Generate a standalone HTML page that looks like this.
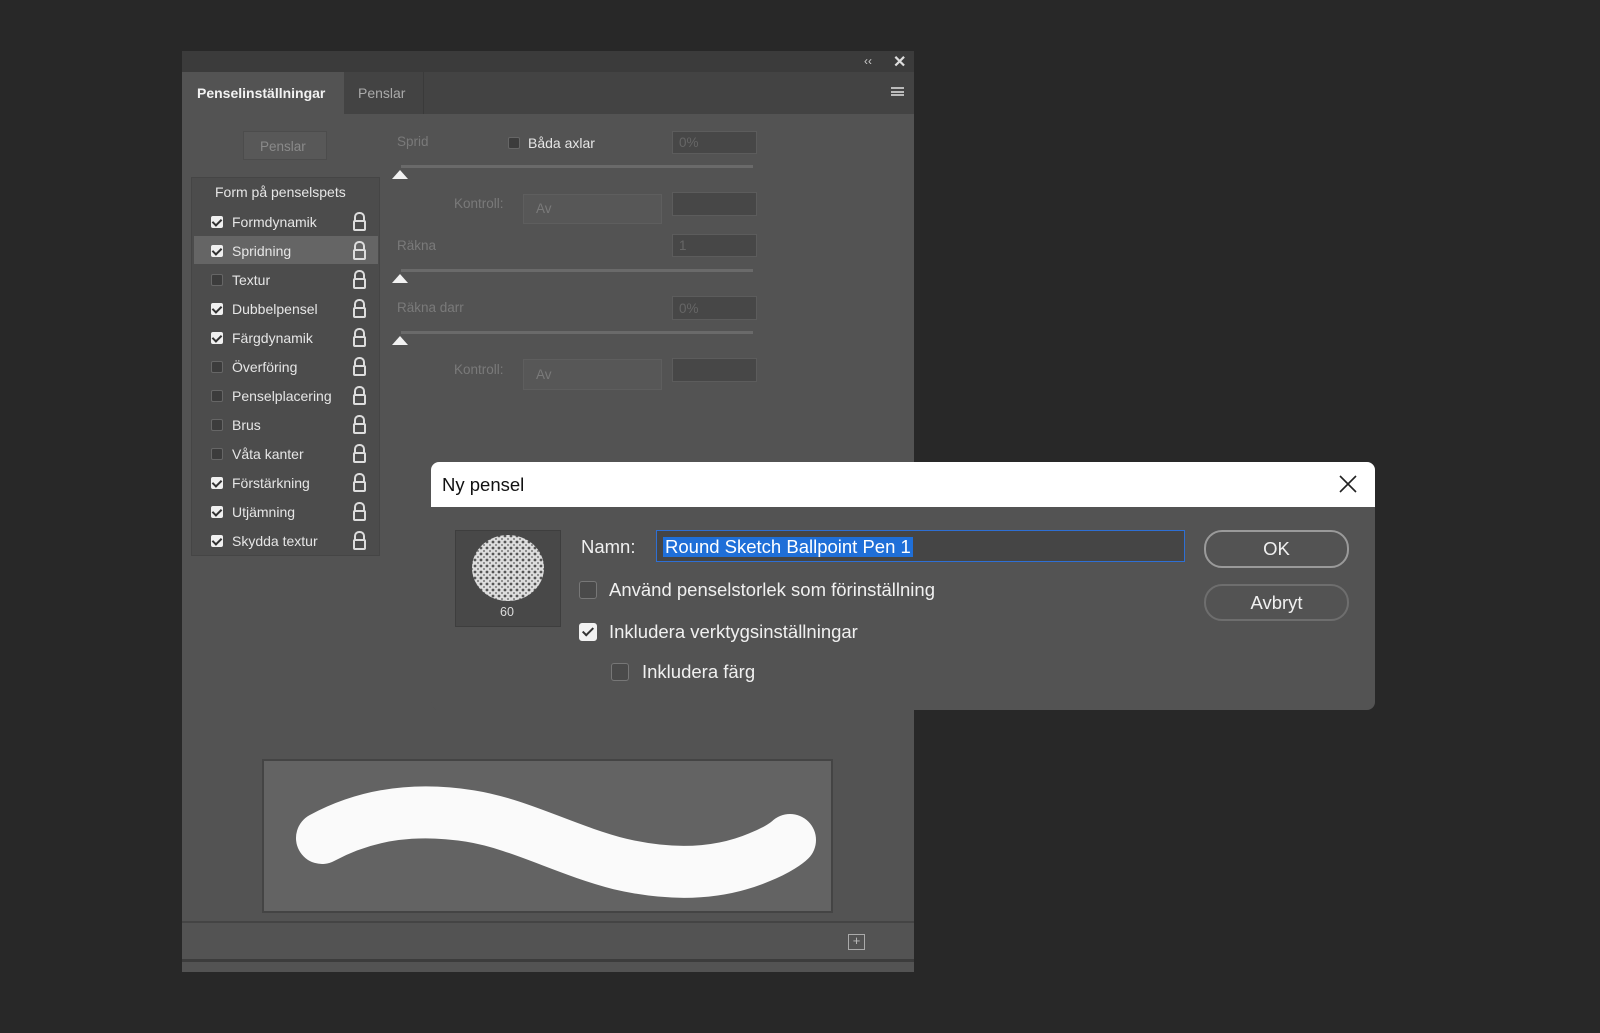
<!DOCTYPE html>
<html><head><meta charset="utf-8"><style>
*{margin:0;padding:0;box-sizing:border-box}
body{width:1600px;height:1033px;background:#282828;position:relative;overflow:hidden;font-family:"Liberation Sans",sans-serif}
.a{position:absolute}
.panel{left:182px;top:51px;width:732px;height:921px;background:#535353}
.t{color:#e6e6e6;font-size:14px}
.dim{color:#7a7a7a;font-size:13.5px}
.cb{width:12px;height:12px;border-radius:2px;background:#3c3c3c;border:1px solid #666}
.cbk{width:12px;height:12px;border-radius:2px;background:#f0f0f0}
.cbk::after{content:"";position:absolute;left:3px;top:1px;width:4px;height:7px;border:solid #333;border-width:0 2px 2px 0;transform:rotate(45deg)}
.inp{background:#474747;border:1px solid #5c5c5c}
.slider{height:3px;background:#6a6a6a}
.thumb{width:0;height:0;border-left:8px solid transparent;border-right:8px solid transparent;border-bottom:9px solid #f2f2f2}
.lock{width:13px;height:11px;border:2px solid #ddd;border-radius:2px}
.lock::before{content:"";position:absolute;left:-1px;top:-10px;width:7px;height:8px;border:2px solid #ddd;border-bottom:none;border-radius:5px 5px 0 0}
.dlg{left:431px;top:462px;width:944px;height:248px;background:#535353;border-radius:8px;overflow:hidden}
.dt{color:#f0f0f0;font-size:18.5px}
.btn{border:2px solid #9a9a9a;border-radius:18px;color:#f0f0f0;font-size:18.5px;text-align:center}
.dcb{width:18px;height:18px;border-radius:3px;border:1px solid #777;background:#4a4a4a}
</style></head><body>
<div class="a panel"></div>
<div class="a" style="left:182px;top:51px;width:732px;height:21px;background:#3b3b3b"></div>
<div class="a" style="left:864px;top:54px;color:#ccc;font-size:12px">‹‹</div>
<div class="a" style="left:893px;top:52px;color:#ddd;font-size:16px;font-weight:bold">✕</div>
<div class="a" style="left:182px;top:72px;width:732px;height:42px;background:#434343"></div>
<div class="a" style="left:182px;top:72px;width:162px;height:42px;background:#535353"></div>
<div class="a" style="left:344px;top:72px;width:80px;height:42px;border-right:1px solid #3a3a3a"></div>
<div class="a t" style="left:197px;top:85px;font-weight:bold;color:#f2f2f2">Penselinställningar</div>
<div class="a" style="left:358px;top:85px;color:#aaa;font-size:14px">Penslar</div>
<div class="a" style="left:891px;top:87px;width:13px;height:9px;border-top:2px solid #bbb;border-bottom:2px solid #bbb"></div>
<div class="a" style="left:891px;top:91px;width:13px;height:2px;background:#bbb"></div>
<div class="a" style="left:243px;top:131px;width:84px;height:29px;background:#585858;border:1px solid #4c4c4c"></div>
<div class="a dim" style="left:260px;top:139px;color:#8a8a8a">Penslar</div>
<div class="a" style="left:191px;top:177px;width:189px;height:379px;background:#4c4c4c;border:1px solid #454545"></div>
<div class="a t" style="left:215px;top:184px">Form på penselspets</div>

<div class="a" style="left:194px;top:236px;width:184px;height:28px;background:#656565"></div>

<div class="a cbk" style="left:211px;top:216px"></div><div class="a t" style="left:232px;top:214px">Formdynamik</div><div class="a lock" style="left:353px;top:220px"></div>
<div class="a cbk" style="left:211px;top:245px"></div><div class="a t" style="left:232px;top:243px">Spridning</div><div class="a lock" style="left:353px;top:249px"></div>
<div class="a cb" style="left:211px;top:274px"></div><div class="a t" style="left:232px;top:272px">Textur</div><div class="a lock" style="left:353px;top:278px"></div>
<div class="a cbk" style="left:211px;top:303px"></div><div class="a t" style="left:232px;top:301px">Dubbelpensel</div><div class="a lock" style="left:353px;top:307px"></div>
<div class="a cbk" style="left:211px;top:332px"></div><div class="a t" style="left:232px;top:330px">Färgdynamik</div><div class="a lock" style="left:353px;top:336px"></div>
<div class="a cb" style="left:211px;top:361px"></div><div class="a t" style="left:232px;top:359px">Överföring</div><div class="a lock" style="left:353px;top:365px"></div>
<div class="a cb" style="left:211px;top:390px"></div><div class="a t" style="left:232px;top:388px">Penselplacering</div><div class="a lock" style="left:353px;top:394px"></div>
<div class="a cb" style="left:211px;top:419px"></div><div class="a t" style="left:232px;top:417px">Brus</div><div class="a lock" style="left:353px;top:423px"></div>
<div class="a cb" style="left:211px;top:448px"></div><div class="a t" style="left:232px;top:446px">Våta kanter</div><div class="a lock" style="left:353px;top:452px"></div>
<div class="a cbk" style="left:211px;top:477px"></div><div class="a t" style="left:232px;top:475px">Förstärkning</div><div class="a lock" style="left:353px;top:481px"></div>
<div class="a cbk" style="left:211px;top:506px"></div><div class="a t" style="left:232px;top:504px">Utjämning</div><div class="a lock" style="left:353px;top:510px"></div>
<div class="a cbk" style="left:211px;top:535px"></div><div class="a t" style="left:232px;top:533px">Skydda textur</div><div class="a lock" style="left:353px;top:539px"></div>

<div class="a dim" style="left:397px;top:134px">Sprid</div>
<div class="a cb" style="left:508px;top:137px"></div>
<div class="a t" style="left:528px;top:135px">Båda axlar</div>
<div class="a inp" style="left:672px;top:131px;width:85px;height:23px"></div><div class="a dim" style="left:679px;top:135px;color:#666">0%</div>
<div class="a slider" style="left:401px;top:165px;width:352px"></div>
<div class="a thumb" style="left:392px;top:170px"></div>
<div class="a dim" style="left:454px;top:196px">Kontroll:</div>
<div class="a" style="left:523px;top:194px;width:139px;height:30px;background:#575757;border:1px solid #5e5e5e"></div><div class="a dim" style="left:536px;top:201px">Av</div>
<div class="a inp" style="left:672px;top:192px;width:85px;height:24px"></div>
<div class="a dim" style="left:397px;top:238px">Räkna</div>
<div class="a inp" style="left:672px;top:234px;width:85px;height:23px"></div><div class="a dim" style="left:679px;top:238px;color:#666">1</div>
<div class="a slider" style="left:401px;top:269px;width:352px"></div>
<div class="a thumb" style="left:392px;top:274px"></div>
<div class="a dim" style="left:397px;top:300px">Räkna darr</div>
<div class="a inp" style="left:672px;top:296px;width:85px;height:24px"></div><div class="a dim" style="left:679px;top:301px;color:#666">0%</div>
<div class="a slider" style="left:401px;top:331px;width:352px"></div>
<div class="a thumb" style="left:392px;top:336px"></div>
<div class="a dim" style="left:454px;top:362px">Kontroll:</div>
<div class="a" style="left:523px;top:359px;width:139px;height:31px;background:#575757;border:1px solid #5e5e5e"></div><div class="a dim" style="left:536px;top:367px">Av</div>
<div class="a inp" style="left:672px;top:358px;width:85px;height:24px"></div>

<div class="a" style="left:262px;top:759px;width:571px;height:154px;background:#636363;border:2px solid #444"></div>
<svg class="a" style="left:0;top:0" width="1600" height="1033">
<path d="M322 838 C370 812 420 808 470 816 C520 824 565 850 620 864 C680 878 725 872 760 857 C778 850 788 842 790 840" fill="none" stroke="#fafafa" stroke-width="52" stroke-linecap="round"/>
</svg>
<div class="a" style="left:182px;top:921px;width:732px;height:2px;background:#444"></div>
<div class="a" style="left:848px;top:934px;width:17px;height:16px;border:1.5px solid #aaa;color:#bbb;font-size:13px;line-height:12px;text-align:center">+</div>
<div class="a" style="left:182px;top:959px;width:732px;height:3px;background:#3c3c3c"></div>

<div class="a dlg">
<div class="a" style="left:0;top:0;width:944px;height:45px;background:#fff"></div>
<div class="a" style="left:11px;top:12px;font-size:18.5px;color:#111">Ny pensel</div>
<svg class="a" style="left:908px;top:13px" width="18" height="18"><path d="M1 1L17 17M17 1L1 17" stroke="#222" stroke-width="1.6"/></svg>
<div class="a" style="left:24px;top:68px;width:106px;height:97px;background:#484848;border:1px solid #3e3e3e"></div>
<svg class="a" style="left:36px;top:72px" width="82" height="68"><defs><pattern id="p" width="6" height="6" patternUnits="userSpaceOnUse"><rect width="6" height="6" fill="#ddd"/><circle cx="2" cy="2" r="1.4" fill="#555"/><circle cx="5" cy="5" r="1" fill="#777"/></pattern></defs><ellipse cx="41" cy="34" rx="36" ry="33" fill="url(#p)"/></svg>
<div class="a" style="left:69px;top:143px;color:#ddd;font-size:12.5px">60</div>
<div class="a dt" style="left:150px;top:74px">Namn:</div>
<div class="a" style="left:225px;top:68px;width:529px;height:32px;background:#454545;border:1.5px solid #2e6fd4"></div>
<div class="a" style="left:232px;top:75px;background:#1f6fd8;color:#fff;font-size:18.5px;padding:0 2px;line-height:20px">Round Sketch Ballpoint Pen 1</div>
<div class="a btn" style="left:773px;top:68px;width:145px;height:38px;line-height:34px">OK</div>
<div class="a btn" style="left:773px;top:122px;width:145px;height:37px;line-height:33px;border-color:#6e6e6e">Avbryt</div>
<div class="a dcb" style="left:148px;top:119px"></div>
<div class="a dt" style="left:178px;top:117px">Använd penselstorlek som förinställning</div>
<div class="a dcb" style="left:148px;top:161px;background:#f2f2f2;border-color:#f2f2f2"></div>
<div class="a" style="left:154px;top:163px;width:6px;height:11px;border:solid #333;border-width:0 2.5px 2.5px 0;transform:rotate(45deg)"></div>
<div class="a dt" style="left:178px;top:159px">Inkludera verktygsinställningar</div>
<div class="a dcb" style="left:180px;top:201px"></div>
<div class="a dt" style="left:211px;top:199px">Inkludera färg</div>
</div>
</body></html>
